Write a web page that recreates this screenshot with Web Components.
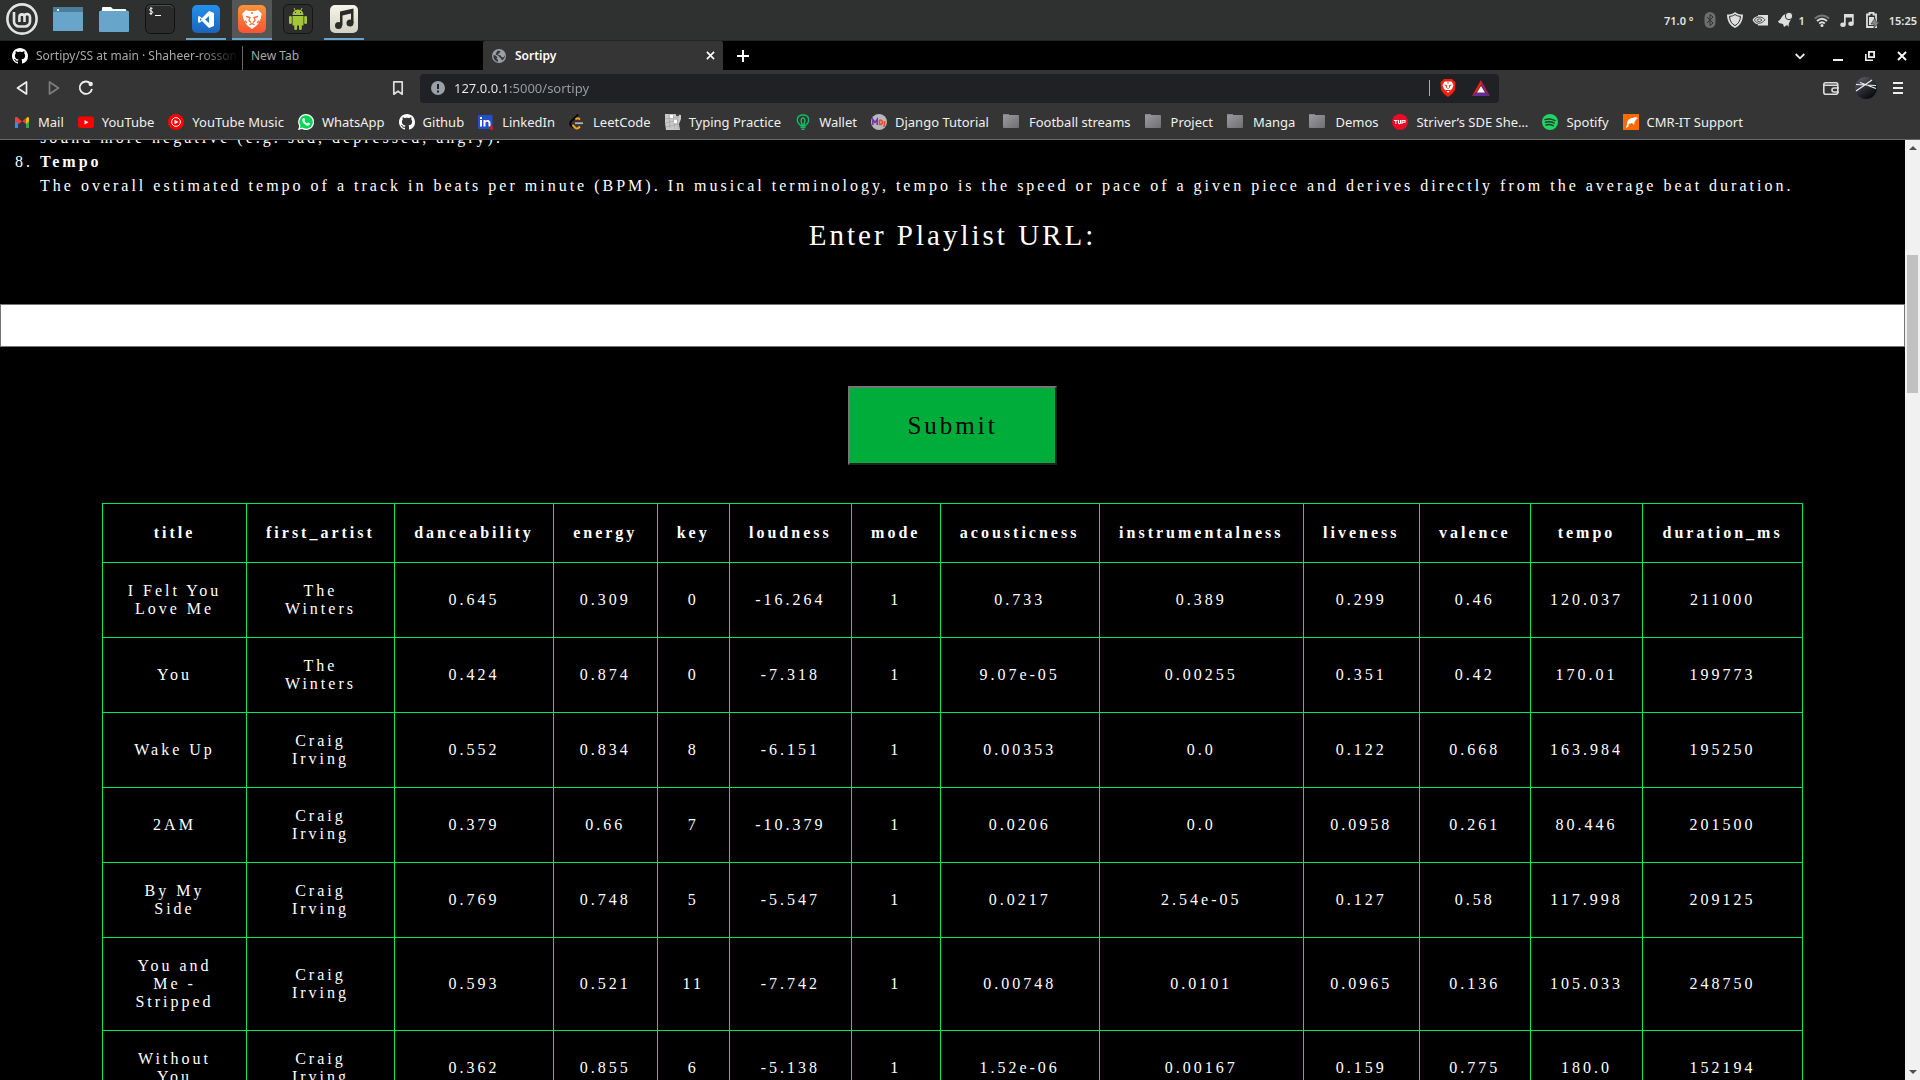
<!DOCTYPE html>
<html lang="en">
<head>
<meta charset="utf-8">
<title>Sortipy</title>
<style>
  html, body { margin: 0; height: 100%; background: #000; }
  body { overflow: hidden; font-family: "Noto Sans", "Open Sans", sans-serif; font-size: 12px; color: #eee; }
</style>
</head>
<body>
<desktop-screen>
  <system-panel slot="panel"></system-panel>
  <tab-strip slot="window"></tab-strip>
  <nav-toolbar slot="window"></nav-toolbar>
  <bookmark-bar slot="window">
    <bookmark-link icon="gmail">Mail</bookmark-link>
    <bookmark-link icon="youtube">YouTube</bookmark-link>
    <bookmark-link icon="ytmusic">YouTube Music</bookmark-link>
    <bookmark-link icon="whatsapp">WhatsApp</bookmark-link>
    <bookmark-link icon="github">Github</bookmark-link>
    <bookmark-link icon="linkedin">LinkedIn</bookmark-link>
    <bookmark-link icon="leetcode">LeetCode</bookmark-link>
    <bookmark-link icon="keys">Typing Practice</bookmark-link>
    <bookmark-link icon="bulb">Wallet</bookmark-link>
    <bookmark-link icon="mdj">Django Tutorial</bookmark-link>
    <bookmark-link icon="bmfolder">Football streams</bookmark-link>
    <bookmark-link icon="bmfolder">Project</bookmark-link>
    <bookmark-link icon="bmfolder">Manga</bookmark-link>
    <bookmark-link icon="bmfolder">Demos</bookmark-link>
    <bookmark-link icon="tuf">Striver’s SDE She…</bookmark-link>
    <bookmark-link icon="spotify">Spotify</bookmark-link>
    <bookmark-link icon="cmr">CMR-IT Support</bookmark-link>
  </bookmark-bar>
  <page-view slot="window">
    <feature-list></feature-list>
    <playlist-form></playlist-form>
    <track-table></track-table>
  </page-view>
</desktop-screen>

<script>
const ICONS = {
  mint: ['0 0 32 32', '<circle cx="16" cy="16" r="14.6" fill="none" stroke="#e3e3e3" stroke-width="2.6"/><path d="M8 9v9.500a5 5 0 0 0 5 5h6a5 5 0 0 0 5-5v-4.500a3 3 0 0 0-3-3 2.600 2.600 0 0 0-2.500 2.600V19M18.500 14a2.600 2.600 0 0 0-2.500-2.600A2.600 2.600 0 0 0 13.400 14v5" fill="none" stroke="#e3e3e3" stroke-width="2.600"/>'],
  windowapp: ['0 0 30 24', '<path fill="#68a5cb" d="M0 0h30v24H0z"/><path fill="#4b7e9b" d="M0 0h30v5H0z"/><path fill="#fff" d="M4 2h2v2H4z"/>'],
  folder: ['0 0 30 25', '<path fill="#4b7e9b" d="M0 6l2-3h26l2 3v6H0z"/><path fill="#fff" d="M3 1q0-1 1-1h8l2 2h12q1 0 1 1v2H3z"/><rect y="4" width="30" height="21" rx="1" fill="#68a5cb"/>'],
  terminal: ['0 0 30 30', '<rect x=".5" y=".5" width="29" height="29" rx="5" fill="#2b2b2b" stroke="#111"/><path d="M2 4q1-2.500 4-2.500h18q3 0 4 2.500" fill="none" stroke="#505050"/><path d="M7.500 4.300C4 4 4 7 6.300 7.200s2 3-1.800 2.300M6 3v8M10 11.500h6" fill="none" stroke="#fff"/>'],
  vscode: ['0 0 30 30', '<defs><linearGradient id="g" x2="0" y2="1"><stop stop-color="#2391ec"/><stop offset="1" stop-color="#1b64bd"/></linearGradient></defs><rect x="1" y="1" width="28" height="28" rx="5" fill="url(#g)"/><path fill="#fff" fill-rule="evenodd" d="M18 7l5 2v13l-5 2-7-7-3 2-1-1v-5l1-1 3 2zM18 12l-4 3.500 4 3.500zM9 14v3l1.500-1.500z"/>'],
  braveapp: ['0 0 30 30', '<defs><linearGradient id="g" x2="0" y2="1"><stop stop-color="#fb9337"/><stop offset="1" stop-color="#fb5335"/></linearGradient></defs><rect x="1" y="1" width="28" height="28" rx="5" fill="url(#g)"/><path fill="#fff" d="M9 6l3 1h6l3-1 4 4-1 2 0 2-3 6-2 2-4 3-4-3-2-2-3-6V12l-1-2z"/><path fill="none" stroke="#fb6a35" stroke-width="1.300" d="M9 12.500l4 1-1 3 2 2M21 12.500l-4 1 1 3-2 2M12.500 21l2.500-1.500 2.500 1.500M14 9h2M8 17l2 2M22 17l-2 2"/>'],
  android: ['0 0 30 30', '<rect x=".5" y=".5" width="29" height="29" rx="5" fill="#2d2d2d" stroke="#151515"/><g fill="#a4c639"><path d="M9.500 11a5.500 5.500 0 0 1 11 0zM9.500 12h11v9.500h-11z"/><rect x="6" y="12" width="2.800" height="8" rx="1.300"/><rect x="21.200" y="12" width="2.800" height="8" rx="1.300"/><rect x="11.300" y="19" width="2.800" height="7" rx="1.300"/><rect x="16" y="19" width="2.800" height="7" rx="1.300"/></g><path d="M11 4l1.500 3M19 4l-1.500 3" stroke="#a4c639"/><path fill="#2d2d2d" d="M12 8h1v1h-1zM17 8h1v1h-1z"/>'],
  musicapp: ['0 0 30 30', '<defs><linearGradient id="g" x2="0" y2="1"><stop stop-color="#f6f5e8"/><stop offset="1" stop-color="#d3d1c2"/></linearGradient></defs><rect x="1" y="1" width="28" height="28" rx="5" fill="url(#g)"/><g fill="#2b2b2b"><circle cx="9.500" cy="21.500" r="3.500"/><circle cx="21" cy="19" r="3.500"/><path d="M11 7.500l13.500-3V19H22V9.500l-8.500 2v10H11z"/></g>'],
  bluetooth: ['0 0 16 16', '<rect x="2.500" width="11" height="16" rx="5.500" fill="#6d6e6e"/><path d="M5 5l6 6-3 2.500v-11L11 5l-6 6" fill="none" stroke="#2f3030"/>'],
  shield: ['0 0 16 16', '<path fill="#dedede" d="M8 0c2 2 5 2.500 8 2.500C16 9 13 14 8 16 3 14 0 9 0 2.500 3 2.500 6 2 8 0z"/><path d="M8 2.500c1.500 1.200 3.500 1.700 5.500 1.900C13.300 9 11 12.200 8 13.600 5 12.200 2.700 9 2.500 4.400 4.500 4.200 6.500 3.700 8 2.500z" fill="none" stroke="#2f3030"/>'],
  nvidia: ['0 0 16 16', '<path fill="#dedede" d="M6 3h10v10.500H6z"/><path fill="#dedede" d="M.5 8C2 5 4.500 4 7 4v8.500C4.500 12.500 2 11 .5 8z"/><path d="M6 5.200c3-.6 5.500.6 7 2.600-2 2.600-4.300 3.600-6.500 3.400M6 5.200C4.500 5.500 3.200 6.500 2.500 8c.8 1.600 2.200 2.800 4 3.200M5 8.300C6 6.300 8.500 6.500 10 8 8.500 10 6 10 5 8.300z" fill="none" stroke="#3a3b3b" stroke-width=".9"/>'],
  bell: ['0 0 16 16', '<path fill="#dedede" d="M1 9c4-1 3-7 9-7l4 5c-1 3-3 4-2 8l-2-2-3 2-1-3-4-1z"/><circle cx="12" cy="4" r="3.700" fill="#dedede" stroke="#2f3030"/>'],
  wifi: ['0 0 16 16', '<path d="M.8 6.500Q8 .5 15.200 6.500" fill="none" stroke="#777" stroke-width="1.800"/><path d="M3 9Q8 4.500 13 9M5.200 11.500Q8 9 10.800 11.500" fill="none" stroke="#dedede" stroke-width="1.800"/><circle cx="8" cy="13.500" r="1.500" fill="#dedede"/>'],
  note: ['0 0 16 16', '<g fill="#dedede"><ellipse cx="4" cy="12.700" rx="2.700" ry="2.200"/><ellipse cx="12" cy="11.700" rx="2.700" ry="2.200"/><path d="M5 2h9.700v9.500H13V5.500H6.700v7H5z"/></g>'],
  battery: ['0 0 16 16', '<path d="M3 2.500h2.500V.8h4v1.700H12V15H3z" fill="none" stroke="#dedede" stroke-width="1.800"/><path fill="#dedede" d="M5 5h5v8H5z"/><path fill="#888" stroke="#2f3030" stroke-width=".6" d="M11 6l-4 6h3v4l5.500-6H12z"/>'],
  github: ['0 0 16 16', '<path fill="#fff" d="M8 0C3.580 0 0 3.580 0 8c0 3.540 2.290 6.530 5.470 7.590.4.070.55-.17.55-.38 0-.19-.01-.82-.01-1.490-2.010.37-2.530-.49-2.690-.94-.09-.23-.48-.94-.82-1.130-.28-.15-.68-.52-.01-.53.63-.01 1.080.58 1.230.82.72 1.210 1.870.87 2.330.66.07-.52.28-.87.51-1.070-1.780-.2-3.640-.89-3.640-3.950 0-.87.31-1.590.82-2.150-.08-.2-.36-1.020.08-2.120 0 0 .67-.21 2.200.82.64-.18 1.320-.27 2-.27s1.360.09 2 .27c1.530-1.040 2.200-.82 2.200-.82.44 1.100.16 1.920.08 2.120.51.56.82 1.270.82 2.150 0 3.070-1.870 3.750-3.650 3.950.29.25.54.73.54 1.480 0 1.070-.01 1.930-.01 2.200 0 .21.15.46.55.38A8.010 8.010 0 0 0 16 8c0-4.420-3.580-8-8-8z"/>'],
  globe: ['0 0 16 16', '<circle cx="8" cy="8" r="7" fill="#9aa0a6"/><path fill="#353535" d="M2.500 7l2 .5 2 2-1 1 1.500 1.500v1.800C4 13 2 10.500 2.500 7zM6.500 2.800l3 .2-1 2-2 1.500 3 1 1.500 2 2-.5 1-2c.3 2.500-1.500 4.500-3 5.500l-1-2-3-3-2.500-1 1-2z"/>'],
  close: ['0 0 10 10', '<path d="M1 1l8 8M9 1L1 9" stroke="#fff" stroke-width="1.800"/>'],
  plus: ['0 0 12 12', '<path d="M6 0v12M0 6h12" stroke="#fff" stroke-width="2"/>'],
  chevron: ['0 0 10 10', '<path d="M.7 3L5 7.300 9.300 3" fill="none" stroke="#eee" stroke-width="1.800"/>'],
  minimize: ['0 0 10 10', '<path d="M0 9h10" stroke="#eee" stroke-width="2"/>'],
  restore: ['0 0 10 10', '<path d="M3.900.9h5.200v5.200H3.900z" fill="none" stroke="#eee" stroke-width="1.800"/><path d="M.8 3v6.200H8" fill="none" stroke="#eee" stroke-width="1.600"/>'],
  back: ['0 0 16 16', '<path d="M12.500 2v12L3.500 8z" fill="none" stroke="#eee" stroke-width="1.700" stroke-linejoin="round"/>'],
  forward: ['0 0 16 16', '<path d="M3.500 2v12l9-6z" fill="none" stroke="#7d7d7d" stroke-width="1.700" stroke-linejoin="round"/>'],
  reload: ['0 0 16 16', '<path d="M12.500 3.500A6.200 6.200 0 1 0 14 9" fill="none" stroke="#eee" stroke-width="1.800"/><circle cx="12.700" cy="4" r="2.200" fill="#eee"/>'],
  bookmark: ['0 0 16 16', '<path d="M3.800 1.800h8.400v12.400L8 11.200l-4.200 3z" fill="none" stroke="#ddd" stroke-width="1.700" stroke-linejoin="round"/>'],
  info: ['0 0 16 16', '<circle cx="8" cy="8" r="7" fill="#9aa0a6"/><path d="M8 4v5M8 10.500v2" stroke="#202124" stroke-width="2"/>'],
  brave: ['0 0 16 18', '<path fill="#f4200c" d="M4 0h8l1.500 1.500L15.500 3l-.5 8-3 4-4 3-4-3-3-4L.5 3l2-1.500z"/><path fill="#fff" d="M4.500 2.500h7L13.500 6 12 10l-2 1.500L8 14l-2-2.500L4 10 2.500 6z"/><path fill="none" stroke="#f4200c" d="M4.500 6l2 .5v2l1 1M11.500 6l-2 .5v2l-1 1M8 3v1.500M6 11.500h4"/>'],
  bat: ['0 0 18 16', '<path fill="#f4200c" d="M9 0v5L5 12l-5 4z"/><path fill="#9e1f63" d="M9 0l9 16-5-4-4-7z"/><path fill="#662d91" d="M0 16l5-4h8l5 4z"/><path fill="#fff" d="M9 6l4 6.500H5z"/>'],
  wallet: ['0 0 16 16', '<rect x=".8" y="2.800" width="14" height="11.400" rx="2" fill="none" stroke="#ddd" stroke-width="1.600"/><path d="M1 5.200h13M16 8h-5a1.800 1.800 0 0 0 0 4h5" fill="none" stroke="#ddd" stroke-width="1.600"/>'],
  avatar: ['0 0 22 22', '<defs><linearGradient id="g" x2=".7" y2="1"><stop stop-color="#667"/><stop offset=".55" stop-color="#2a2c33"/><stop offset="1" stop-color="#08090c"/></linearGradient></defs><circle cx="11" cy="11" r="11" fill="url(#g)"/><path d="M1 14L17 3M5 5.500l16 6M1 7.500l20 1" stroke="#eee" stroke-width="1.200"/>'],
  menu: ['0 0 10 14', '<path d="M0 2h10M0 7h10M0 12h10" stroke="#eee" stroke-width="2"/>'],
  gmail: ['0 0 16 16', '<path fill="#4285f4" d="M1 3.500h3V14H1z"/><path fill="#34a853" d="M12 6h3v8h-3z"/><path fill="#fbbc04" d="M12 4.500Q14 1.800 15 4v3.500l-3 2.500z"/><path fill="#ea4335" d="M1 4q1-2 3 0l4 3.500 4-3.500v6l-4-3-3 3-4-3z"/>'],
  youtube: ['0 0 16 16', '<rect y="2.500" width="16" height="11.500" rx="2.800" fill="#f00"/><path fill="#fff" d="M6.500 6l4 2.200-4 2.300z"/>'],
  ytmusic: ['0 0 16 16', '<circle cx="8" cy="8" r="8" fill="#f00"/><circle cx="8" cy="8" r="4.400" fill="none" stroke="#fff"/><path fill="#fff" d="M6.500 5.700l4 2.300-4 2.300z"/>'],
  whatsapp: ['0 0 16 16', '<path fill="#fff" d="M8 0a8 8 0 1 1-3.800 15L0 16l1.200-4A8 8 0 0 1 8 0z"/><path fill="#00d757" d="M8 1.300a6.700 6.700 0 1 1-3.600 12.300l-2.600.7.800-2.500A6.700 6.700 0 0 1 8 1.300z"/><path fill="#fff" d="M5.300 4h1l.8 2-.7 1q1 1.800 2.700 2.400l.9-.9 2 1c0 2-2 2.500-3.500 1.900C6 10.400 4 8 4.200 5.800q.2-1.300 1.100-1.800z"/>'],
  linkedin: ['0 0 16 16', '<path fill="#2150c8" d="M0 1h14.500v14H0z"/><path fill="#fff" d="M2 6h2v6.500H2zM2 3h2v2H2zM5.500 6h2v1c1-1.500 5-1.700 5 2v3.500h-2V9c0-1.800-3-1.800-3 0v3.500h-2z"/><circle cx="13.500" cy="14" r="2" fill="#e01313"/>'],
  leetcode: ['0 0 16 16', '<path d="M9 .5L2 7.500q-1.800 2 0 4l2 2" fill="none" stroke="#070707" stroke-width="2"/><path d="M11 5.500q-2.500-2.500-4.500 0M3.500 11l3 3q2 1.500 4.500-1.500" fill="none" stroke="#ffa116" stroke-width="2"/><path d="M6 9.200h8" stroke="#b3b3b3" stroke-width="1.800"/>'],
  keys: ['0 0 16 16', '<path fill="#c9c9c9" d="M0 0h10l6 1v4l-2 5 1 6H1L0 9z"/><path d="M0 5l14-2M0 9l14-3M1 13l13-3M4 0l1 14M8 0l2 15M12 1l1 14" stroke="#a3a3a3" stroke-width=".7"/><path fill="#fff" d="M5 1h3v3H5zM9 6h3v3H9z"/><path fill="#444" d="M11 0h3v2h-3z"/>'],
  bulb: ['0 0 16 16', '<path d="M5.500 11.500C1 8 1 1 8 1s7 7 2.500 10.500zM8 11.500C5.500 9 5.500 4 8 4s2.500 5 0 7.500M5.500 13.300h5M6.500 15.200h3" fill="none" stroke="#12bd62" stroke-width="1.400"/>'],
  mdj: ['0 0 16 16', '<circle cx="8" cy="8" r="8" fill="#b7b7bd"/><path d="M1.800 11V5.500L4 8.500l2.200-3V11" fill="none" stroke="#703aa6" stroke-width="1.600"/><path d="M8.500 6v4.500c4 .3 4-5 0-4.500M13.500 7v4q0 1.500-1.500 1" fill="none" stroke="#ef4a25" stroke-width="1.500"/>'],
  bmfolder: ['0 0 16 16', '<defs><linearGradient id="g" x2="1" y2="1"><stop stop-color="#9b9aa0"/><stop offset="1" stop-color="#6f6e70"/></linearGradient></defs><path fill="#858488" d="M0 0h6v2H0z"/><rect y="1" width="16" height="13" rx="1" fill="url(#g)"/>'],
  tuf: ['0 0 16 16', '<circle cx="8" cy="8" r="8" fill="#ea0b28"/><path d="M2 6.500h3.500M3.800 6.500V10M6.500 6v3q1 1.500 2 0V6M10 10V6.500h3v1.800h-3" fill="none" stroke="#fff" stroke-width="1.100"/>'],
  spotify: ['0 0 16 16', '<circle cx="8" cy="8" r="8" fill="#1ed760"/><path d="M3 5.600q5.500-1.500 10 1M3.500 8.300q5-1.300 8.700.8M4 10.900q4-1 7.200.7" fill="none" stroke="#2d3630" stroke-width="1.500" stroke-linecap="round"/>'],
  cmr: ['0 0 16 16', '<path fill="#ff6a00" d="M0 0h16v16H0z"/><path fill="#fff" d="M3 14l1-4c0-4 3-6 6-6l2-1 3 1-2 1.500-1.500 2.500-.5 3-2-2-3 1-1 3z"/>'],
  arrowup: ['0 0 8 4', '<path fill="#505050" d="M0 4l4-4 4 4z"/>'],
  arrowdown: ['0 0 8 4', '<path fill="#505050" d="M0 0l4 4 4-4z"/>']
};

const define = (tag, html) => customElements.define(tag, class extends HTMLElement {
  constructor() {
    super();
    const t = document.createElement('template');
    t.innerHTML = html;
    this.attachShadow({ mode: 'open' }).append(t.content.cloneNode(true));
  }
});

/* <ui-icon name w h>: one drawing from the icon set */
customElements.define('ui-icon', class extends HTMLElement {
  connectedCallback() {
    if (this.shadowRoot) return;
    const [box, body] = ICONS[this.getAttribute('name')];
    const w = this.getAttribute('w') || 16, h = this.getAttribute('h') || w;
    this.attachShadow({ mode: 'open' }).innerHTML =
      `<style>:host{display:block;flex:none}svg{display:block}</style><svg width="${w}" height="${h}" viewBox="${box}" aria-hidden="true">${body}</svg>`;
  }
});

define('desktop-screen', `
<style>
  :host { display: flex; flex-direction: column; height: 100vh; overflow: hidden; }
</style>
<slot name="panel"></slot><slot name="window"></slot>`);

/* <panel-launcher icon open active>: a task bar button, underlined when the app is open */
customElements.define('panel-launcher', class extends HTMLElement {
  connectedCallback() {
    if (this.shadowRoot) return;
    const a = n => this.getAttribute(n);
    this.attachShadow({ mode: 'open' }).innerHTML = `
    <style>
      :host { display: block; }
      button { box-sizing: border-box; width: 40px; height: 40px; padding: 0; border: 0; border-bottom: 2px solid transparent; background: none; display: flex; align-items: center; justify-content: center; }
      :host([open]) button { border-bottom-color: #68a5cb; }
      :host([active]) button { background: #555656; }
    </style>
    <button type="button" aria-label="${a('label')}"><ui-icon name="${a('icon')}" w="${a('w') || 30}" h="${a('h') || 30}"></ui-icon></button>`;
  }
});

define('system-panel', `
<style>
  :host { display: flex; justify-content: space-between; box-sizing: border-box; height: 41px; flex: none; padding: 0 3px 0 2px; background: #2f3130; border-bottom: 1px solid #232424; font-size: 11px; font-weight: 600; color: #e4e4e4; }
  .apps { display: flex; gap: 6px; }
  .tray { display: flex; align-items: center; gap: 9px; }
  .group { display: flex; align-items: center; gap: 5px; }
</style>
<div class="apps">
  <panel-launcher label="Menu" icon="mint" w="32" h="32"></panel-launcher>
  <panel-launcher label="Show desktop" icon="windowapp" w="30" h="24"></panel-launcher>
  <panel-launcher label="Files" icon="folder" w="30" h="25"></panel-launcher>
  <panel-launcher label="Terminal" icon="terminal"></panel-launcher>
  <panel-launcher label="Code" icon="vscode" open></panel-launcher>
  <panel-launcher label="Brave" icon="braveapp" open active></panel-launcher>
  <panel-launcher label="Android Studio" icon="android"></panel-launcher>
  <panel-launcher label="Music" icon="musicapp" open></panel-launcher>
</div>
<div class="tray">
  <span>71.0 °</span>
  <ui-icon name="bluetooth"></ui-icon>
  <ui-icon name="shield"></ui-icon>
  <ui-icon name="nvidia"></ui-icon>
  <span class="group"><ui-icon name="bell"></ui-icon><span>1</span></span>
  <ui-icon name="wifi"></ui-icon>
  <ui-icon name="note"></ui-icon>
  <ui-icon name="battery"></ui-icon>
  <time>15:25</time>
</div>`);

define('tab-strip', `
<style>
  :host { display: flex; height: 29px; flex: none; background: #000; color: #a9a9a9; }
  button { border: 0; padding: 0; background: none; display: flex; align-items: center; color: inherit; font: inherit; }
  .tab { box-sizing: border-box; width: 240px; padding: 0 8px; display: flex; align-items: center; gap: 8px; }
  .first { width: 243px; padding: 0 3px 0 12px; border-right: 1px solid; border-image: linear-gradient(#000 6px, #666 6px) 1; }
  .title { flex: 1; white-space: nowrap; overflow: hidden; text-align: left; }
  .fade { -webkit-mask-image: linear-gradient(90deg, #000 80%, transparent); mask-image: linear-gradient(90deg, #000 80%, transparent); }
  .active { background: #353535; color: #fff; font-weight: 600; border-radius: 2px 2px 0 0; }
  .plus { padding: 0 14px; }
  .controls { margin-left: auto; margin-right: 13px; display: flex; gap: 22px; }
  .controls button:first-child { margin-right: 6px; }
</style>
<div class="tab first"><ui-icon name="github"></ui-icon><span class="title fade">Sortipy/SS at main · Shaheer-rosson</span></div>
<div class="tab"><span class="title">New Tab</span></div>
<div class="tab active"><ui-icon name="globe"></ui-icon><span class="title">Sortipy</span><button type="button" aria-label="Close tab"><ui-icon name="close" w="9"></ui-icon></button></div>
<button class="plus" type="button" aria-label="New tab"><ui-icon name="plus" w="12"></ui-icon></button>
<div class="controls">
  <button type="button" aria-label="Search tabs"><ui-icon name="chevron" w="10"></ui-icon></button>
  <button type="button" aria-label="Minimize"><ui-icon name="minimize" w="10"></ui-icon></button>
  <button type="button" aria-label="Restore"><ui-icon name="restore" w="10"></ui-icon></button>
  <button type="button" aria-label="Close window"><ui-icon name="close" w="10"></ui-icon></button>
</div>`);

define('nav-toolbar', `
<style>
  :host { display: flex; align-items: center; height: 36px; flex: none; padding: 0 17px 0 14px; background: #353535; }
  button { border: 0; padding: 0; background: none; display: block; }
  .nav, .tools { display: flex; align-items: center; gap: 16px; }
  .center { display: flex; align-items: center; gap: 14px; flex: 1; margin: 0 324px 0 296px; }
  .bar { flex: 1; height: 29px; display: flex; align-items: center; gap: 8px; padding: 0 9px 0 10px; background: #202124; border-radius: 4px; }
  input { flex: 1; min-width: 0; border: 0; padding: 0; outline: 0; font: 13px "Noto Sans", sans-serif; -webkit-text-fill-color: transparent; background: linear-gradient(90deg, #eee 55px, #9aa0a6 55px); -webkit-background-clip: text; background-clip: text; }
  .split { width: 1px; height: 16px; background: #aaa; }
  .ext { display: flex; align-items: center; gap: 16px; margin-left: 2px; }
</style>
<div class="nav">
  <button type="button" aria-label="Back"><ui-icon name="back"></ui-icon></button>
  <button type="button" aria-label="Forward"><ui-icon name="forward"></ui-icon></button>
  <button type="button" aria-label="Reload"><ui-icon name="reload"></ui-icon></button>
</div>
<div class="center">
  <button type="button" aria-label="Bookmark this page"><ui-icon name="bookmark"></ui-icon></button>
  <div class="bar">
    <ui-icon name="info"></ui-icon>
    <input type="text" aria-label="Address" value="127.0.0.1:5000/sortipy">
    <span class="split"></span>
    <span class="ext">
      <button type="button" aria-label="Shields"><ui-icon name="brave" w="16" h="18"></ui-icon></button>
      <button type="button" aria-label="Rewards"><ui-icon name="bat" w="18" h="16"></ui-icon></button>
    </span>
  </div>
</div>
<div class="tools">
  <button type="button" aria-label="Wallet"><ui-icon name="wallet"></ui-icon></button>
  <button type="button" aria-label="Profile"><ui-icon name="avatar" w="22"></ui-icon></button>
  <button type="button" aria-label="Menu"><ui-icon name="menu" w="10" h="14"></ui-icon></button>
</div>`);

define('bookmark-bar', `
<style>
  :host { display: flex; align-items: center; gap: 14px; height: 31px; flex: none; padding: 0 14px 2px; background: #353535; border-bottom: 1px solid #666; overflow: hidden; font-size: 13px; }
</style>
<slot></slot>`);

customElements.define('bookmark-link', class extends HTMLElement {
  connectedCallback() {
    if (this.shadowRoot) return;
    this.attachShadow({ mode: 'open' }).innerHTML = `
    <style>
      :host { display: block; flex: none; }
      a { display: flex; align-items: center; gap: 8px; color: #f0f0f0; text-decoration: none; white-space: nowrap; }
      :host([icon="bmfolder"]) a { gap: 10px; }
    </style>
    <a href="#"><ui-icon name="${this.getAttribute('icon')}"></ui-icon><span><slot></slot></span></a>`;
  }
});

define('page-view', `
<style>
  :host { display: flex; flex: 1; min-height: 0; background: #000; color: #fff; font: 16px "Liberation Serif", serif; letter-spacing: 3px; }
  main { flex: 1; min-width: 0; overflow: hidden; }
</style>
<main><slot></slot></main>
<page-scrollbar></page-scrollbar>`);

define('page-scrollbar', `
<style>
  :host { display: flex; flex-direction: column; align-items: center; width: 15px; background: #f1f1f1; box-sizing: border-box; padding: 6px 0; }
  .track { flex: 1; padding-top: 105px; }
  .thumb { width: 11px; height: 138px; background: #c1c1c1; }
</style>
<ui-icon name="arrowup" w="8" h="4"></ui-icon>
<div class="track"><div class="thumb"></div></div>
<ui-icon name="arrowdown" w="8" h="4"></ui-icon>`);

/* The list is scrolled: its first visible line is cut by the top of the view */
define('feature-list', `
<style>
  :host { display: block; line-height: 24px; margin-top: -14px; }
  ol { margin: 0; padding-left: 40px; }
  .rest { list-style: none; }
</style>
<ol start="7">
  <li class="rest">sound more negative (e.g. sad, depressed, angry).</li>
  <li><b>Tempo</b><br>The overall estimated tempo of a track in beats per minute (BPM). In musical terminology, tempo is the speed or pace of a given piece and derives directly from the average beat duration.</li>
</ol>`);

define('playlist-form', `
<style>
  :host { display: block; }
  form { display: flex; flex-direction: column; align-items: center; }
  label { margin: 20px 0 52px; font-size: 29px; line-height: 34px; }
  input { box-sizing: border-box; width: 100%; height: 43px; border: 1px solid #767676; background: #fff; font: inherit; padding: 0 8px; }
  button { margin: 39px 0 38px; padding: 23px 57px; border: 2px solid; border-color: #767676 #212121 #212121 #767676; background: #00ad3a; color: #000; font: 25px/29px "Liberation Serif", serif; letter-spacing: 3px; }
</style>
<form>
  <label for="url">Enter Playlist URL:</label>
  <input id="url" type="text">
  <button type="button">Submit</button>
</form>`);

customElements.define('track-table', class extends HTMLElement {
  connectedCallback() {
    if (this.shadowRoot) return;
    const head = ['title', 'first_artist', 'danceability', 'energy', 'key', 'loudness', 'mode', 'acousticness', 'instrumentalness', 'liveness', 'valence', 'tempo', 'duration_ms'];
    const rows = [
      ['I Felt You Love Me', 'The Winters', '0.645', '0.309', '0', '-16.264', '1', '0.733', '0.389', '0.299', '0.46', '120.037', '211000'],
      ['You', 'The Winters', '0.424', '0.874', '0', '-7.318', '1', '9.07e-05', '0.00255', '0.351', '0.42', '170.01', '199773'],
      ['Wake Up', 'Craig Irving', '0.552', '0.834', '8', '-6.151', '1', '0.00353', '0.0', '0.122', '0.668', '163.984', '195250'],
      ['2AM', 'Craig Irving', '0.379', '0.66', '7', '-10.379', '1', '0.0206', '0.0', '0.0958', '0.261', '80.446', '201500'],
      ['By My Side', 'Craig Irving', '0.769', '0.748', '5', '-5.547', '1', '0.0217', '2.54e-05', '0.127', '0.58', '117.998', '209125'],
      ['You and Me - Stripped', 'Craig Irving', '0.593', '0.521', '11', '-7.742', '1', '0.00748', '0.0101', '0.0965', '0.136', '105.033', '248750'],
      ['Without You', 'Craig Irving', '0.362', '0.855', '6', '-5.138', '1', '1.52e-06', '0.00167', '0.159', '0.775', '180.0', '152194']
    ];
    this.attachShadow({ mode: 'open' }).innerHTML = `
    <style>
      :host { display: block; }
      table { width: calc(100% - 204px); margin: 0 auto; border-collapse: collapse; line-height: 18px; text-align: center; }
      th, td { padding: 19px; border: 1px solid #00e564; white-space: nowrap; }
      th { padding-block: 20px; }
      td:nth-child(-n+2) { white-space: normal; }
      th:nth-child(1) { width: 105px; }
      td:nth-child(2) { width: 90px; }
    </style>
    <table>
      <thead><tr>${head.map(h => `<th scope="col">${h}</th>`).join('')}</tr></thead>
      <tbody>${rows.map(r => `<tr>${r.map(c => `<td>${c}</td>`).join('')}</tr>`).join('')}</tbody>
    </table>`;
  }
});
</script>
</body>
</html>
